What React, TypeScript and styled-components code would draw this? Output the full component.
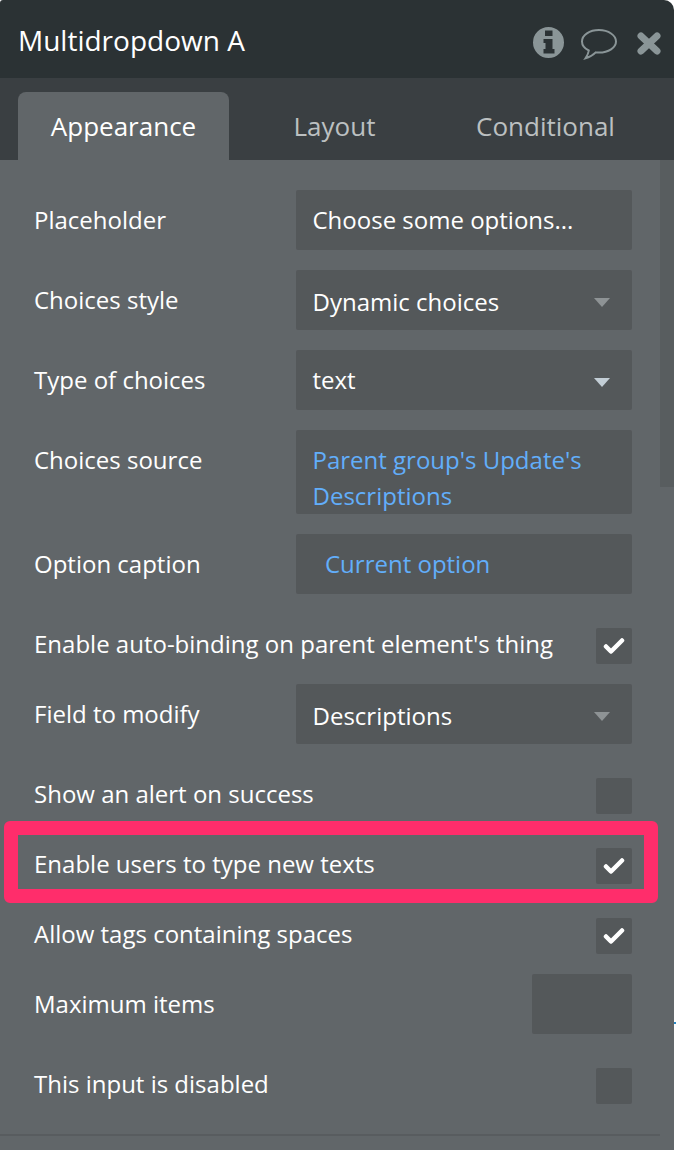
import styled, { createGlobalStyle } from 'styled-components';

const GlobalStyle = createGlobalStyle`
	html, body {
		margin: 0;
		padding: 0;
		background: #ffffff;
	}

	#root {
		width: 676px;
		height: 1150px;
		overflow: hidden;
	}
`;

const InfoIcon = () => (
	<svg width='32' height='34' viewBox='0 0 32 34'>
		<path
			fillRule='evenodd'
			fill='#8a9597'
			d='M15.5 1a15.5 15.5 0 1 0 0 31a15.5 15.5 0 0 0 0-31zM12 4.5h7.5v5.5h-7.5zM10.5 13h9v10h2v4.5h-11v-4.5h2v-6h-2z'
		/>
	</svg>
);

const CommentIcon = () => (
	<svg width='38' height='34' viewBox='0 0 38 34'>
		<path
			fill='none'
			stroke='#8a9597'
			strokeWidth='2'
			d='M19 4C9.5 4 2 9 2 15.5c0 3.8 2.6 7 6.8 9c-.3 2.5-1.4 5-3.3 7.8c4-1 7.6-3.2 10.2-5.9c1.1.1 2.2.2 3.3.2c9.5 0 17-5 17-11.1S28.5 4 19 4z'
		/>
	</svg>
);

const CloseIcon = () => (
	<svg width='29' height='34' viewBox='0 0 29 34'>
		<path stroke='#8a9597' strokeWidth='7' strokeLinecap='round' d='M8 10L24 25M24 10L8 25' />
	</svg>
);

const CheckIcon = () => (
	<svg width='22' height='18' viewBox='0 0 22 18'>
		<path
			fill='none'
			stroke='#ffffff'
			strokeWidth='4.5'
			strokeLinecap='round'
			strokeLinejoin='round'
			d='M3 9.5L8 14.5L19 3.5'
		/>
	</svg>
);

interface ISelectRowProps {
	label: string;
	value: string;
	dim?: boolean;
	raised?: boolean;
}

const SelectRow = ({ label, value, dim, raised }: ISelectRowProps) => (
	<Row>
		<Label>{label}</Label>
		<SelectField $raised={raised}>
			{value}
			<Caret $dim={dim} />
		</SelectField>
	</Row>
);

interface ICheckRowProps {
	label: string;
	checked?: boolean;
	highlighted?: boolean;
}

const CheckRow = ({ label, checked, highlighted }: ICheckRowProps) => (
	<CheckLine>
		<CheckLabel>{label}</CheckLabel>
		<CheckBox>{checked && <CheckIcon />}</CheckBox>
		{highlighted && <Highlight />}
	</CheckLine>
);

const App = () => {
	return (
		<>
			<GlobalStyle />
			<Panel>
				<Header>
					<Title>Multidropdown A</Title>
					<Icons>
						<InfoIcon />
						<CommentIcon />
						<CloseIcon />
					</Icons>
				</Header>
				<Tabs>
					<Tab $active>Appearance</Tab>
					<Tab>Layout</Tab>
					<Tab>Conditional</Tab>
				</Tabs>
				<Body>
					<ScrollThumb />
					<Row>
						<Label>Placeholder</Label>
						<Field>Choose some options...</Field>
					</Row>
					<SelectRow label='Choices style' value='Dynamic choices' dim />
					<SelectRow label='Type of choices' value='text' raised />
					<Row>
						<Label>Choices source</Label>
						<SourceField>Parent group's Update's Descriptions</SourceField>
					</Row>
					<Row>
						<Label>Option caption</Label>
						<CaptionField>Current option</CaptionField>
					</Row>
					<CheckRow label="Enable auto-binding on parent element's thing" checked />
					<SelectRow label='Field to modify' value='Descriptions' dim />
					<CheckRow label='Show an alert on success' />
					<CheckRow label='Enable users to type new texts' checked highlighted />
					<CheckRow label='Allow tags containing spaces' checked />
					<Row>
						<Label>Maximum items</Label>
						<NumberField />
					</Row>
					<CheckRow label='This input is disabled' />
					<Divider />
				</Body>
			</Panel>
			<EdgeTick />
		</>
	);
};

export default App;

const Panel = styled.div`
	display: flex;
	flex-direction: column;

	width: 674px;
	height: 1150px;

	border-radius: 3px 10px 0 0;
	overflow: hidden;

	font-family: 'Open Sans', 'Noto Sans', sans-serif;
	color: #ffffff;
`;

const Header = styled.div`
	display: flex;
	align-items: center;
	justify-content: space-between;

	height: 78px;
	padding: 0 12px 0 18px;
	box-sizing: border-box;
	flex-shrink: 0;

	background: #2b3234;
`;

const Title = styled.span`
	margin-top: 1px;

	font-size: 28px;
	line-height: 36px;
`;

const Icons = styled.div`
	display: flex;
	align-items: center;
	gap: 15px;
	margin-top: 8px;
`;

const Tabs = styled.div`
	display: flex;

	height: 82px;
	padding: 14px 0 0 18px;
	box-sizing: border-box;
	flex-shrink: 0;

	background: #3a3f42;
`;

const Tab = styled.div<{ $active?: boolean }>`
	display: flex;
	align-items: center;
	justify-content: center;

	width: 211px;
	height: 68px;
	box-sizing: border-box;

	border-radius: 8px 8px 0 0;
	background: ${(p) => (p.$active ? '#616669' : 'transparent')};
	color: ${(p) => (p.$active ? '#ffffff' : '#bcc0c1')};
	font-size: 26px;
`;

const Body = styled.div`
	position: relative;
	display: flex;
	flex-direction: column;
	gap: 20px;

	flex: 1;
	padding: 30px 42px 0 34px;

	background: #616669;
`;

const ScrollThumb = styled.div`
	position: absolute;
	top: 0;
	right: 0;

	width: 14px;
	height: 327px;

	background: #585d5f;
`;

const Row = styled.div`
	display: flex;
	justify-content: space-between;
	align-items: flex-start;
`;

const Label = styled.span`
	font-size: 24px;
	line-height: 60px;
`;

const Field = styled.div`
	position: relative;

	width: 336px;
	height: 60px;
	padding: 0 16.5px;
	box-sizing: border-box;

	border-radius: 2px;
	background: #54585a;

	font-size: 24px;
	line-height: 60px;
`;

const SelectField = styled(Field)<{ $raised?: boolean }>`
	line-height: ${(p) => (p.$raised ? '60px' : '63px')};
`;

const SourceField = styled(Field)`
	height: 84px;
	padding-top: 12px;

	color: #62aefa;
	line-height: 36px;
`;

const CaptionField = styled(Field)`
	padding-left: 29px;
	color: #62aefa;
`;

const NumberField = styled(Field)`
	width: 100px;
`;

const Caret = styled.span<{ $dim?: boolean }>`
	position: absolute;
	top: 28px;
	right: 22px;

	width: 0;
	height: 0;

	border-left: 8px solid transparent;
	border-right: 8px solid transparent;
	border-top: 9px solid ${(p) => (p.$dim ? '#8e9395' : '#c3ced6')};
`;

const CheckLine = styled.div`
	position: relative;
	display: flex;
	align-items: center;
	justify-content: space-between;

	height: 50px;
	padding-top: 14px;
	box-sizing: border-box;
`;

const CheckLabel = styled.span`
	margin-bottom: 4px;

	font-size: 24px;
	line-height: 36px;
`;

const CheckBox = styled.div`
	display: flex;
	align-items: center;
	justify-content: center;

	width: 36px;
	height: 36px;

	border-radius: 2px;
	background: #54585a;
`;

const Highlight = styled.div`
	position: absolute;
	top: -13px;
	left: -30px;

	width: 654px;
	height: 82px;
	box-sizing: border-box;

	border: 14px solid #ff2d6b;
	border-radius: 6px;
`;

const Divider = styled.div`
	position: absolute;
	top: 974px;
	left: 0;
	right: 14px;

	height: 2px;
	background: #585c5f;
`;

const EdgeTick = styled.div`
	position: absolute;
	top: 1022px;
	left: 674px;

	width: 2px;
	height: 2px;
	background: #2b8ac6;
`;
